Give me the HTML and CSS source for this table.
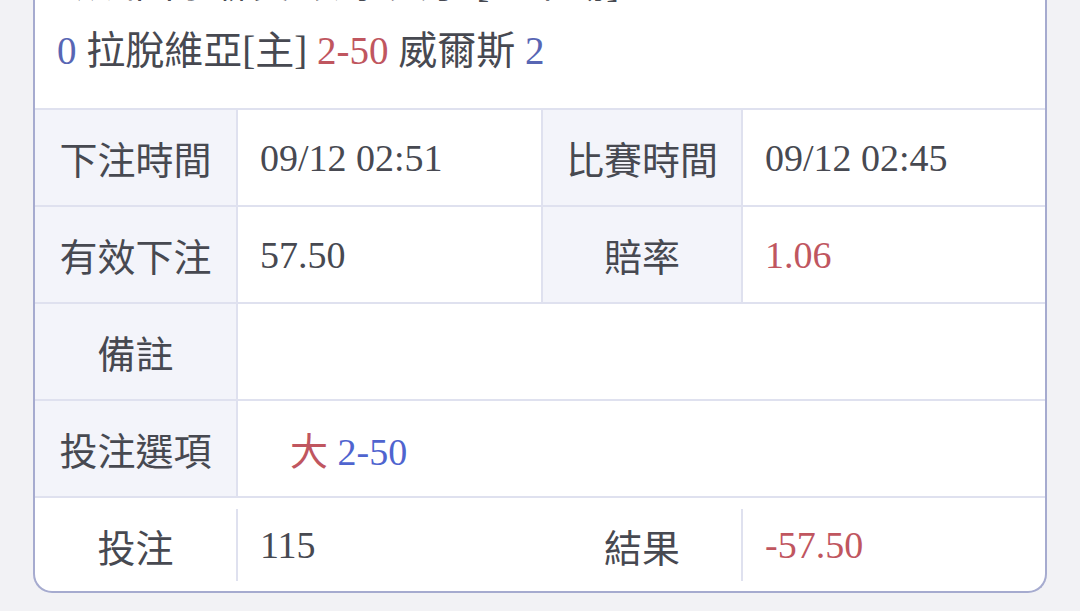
FILE: index.html
```html
<!DOCTYPE html>
<html lang="zh-Hant">
<head>
<meta charset="utf-8">
<link rel="stylesheet" href="styles.css">
</head>
<body>
<div class="page">
  <div class="card">
    <div class="head">
      <div class="line cut">歐洲國家聯賽 滾球 大小 [上半場] 09/12</div>
      <div class="line"><span class="blue">0</span> 拉脫維亞[主] <span class="red">2-50</span> 威爾斯 <span class="blue">2</span></div>
    </div>
    <div class="grid">
      <div class="cell label">下注時間</div>
      <div class="cell val">09/12 02:51</div>
      <div class="cell label">比賽時間</div>
      <div class="cell val last">09/12 02:45</div>

      <div class="cell label">有效下注</div>
      <div class="cell val">57.50</div>
      <div class="cell label">賠率</div>
      <div class="cell val last red">1.06</div>

      <div class="cell label">備註</div>
      <div class="cell val span3 last"></div>

      <div class="cell label">投注選項</div>
      <div class="cell val span3 last"><span class="opt"><span class="red">大</span> <span class="bright">2-50</span></span></div>

      <div class="cell foot"><div class="inner center">投注</div></div>
      <div class="cell foot"><div class="inner val-in">115</div></div>
      <div class="cell foot"><div class="inner center">結果</div></div>
      <div class="cell foot"><div class="inner val-in red">-57.50</div></div>
    </div>
  </div>
</div>
</body>
</html>
```
FILE: styles.css
```css
html, body {
  margin: 0;
  padding: 0;
  background: #f2f2f5;
}
body {
  font-family: "Liberation Serif", "Noto Sans CJK TC", serif;
  color: #474951;
  overflow: hidden;
  height: 611px;
}
.page {
  padding: 0 33px;
}
.card {
  margin-top: -41px;
  background: #ffffff;
  border: 2px solid #a6abcf;
  border-top: none;
  border-radius: 0 0 19px 19px;
  overflow: hidden;
}
.head {
  display: flex;
  flex-direction: column;
  gap: 17px;
  padding: 0 22px 32px;
  font-size: 39px;
}
.line {
  line-height: 50px;
  height: 50px;
  white-space: nowrap;
}
.blue { color: #5866b4; }
.red { color: #c0565f; }
.bright { color: #4f64cf; }

.grid {
  display: grid;
  grid-template-columns: 203px 305px 200px 1fr;
  grid-template-rows: repeat(4, 97px) 93px;
  border-top: 2px solid #dfe1ef;
  font-size: 38px;
}
.cell {
  box-sizing: border-box;
  display: flex;
  align-items: center;
  border-right: 2px solid #dfe1ef;
  border-bottom: 2px solid #dfe1ef;
}
.cell.last { border-right: none; }
.label {
  justify-content: center;
  background: #f3f4fa;
  font-family: "Noto Sans CJK TC", sans-serif;
}
.val {
  padding-left: 22px;
}
.span3 { grid-column: span 3; }
.opt { margin-left: 30px; }

.foot {
  border: none;
  padding: 11px 0 10px;
  align-items: stretch;
}
.inner {
  flex: 1;
  display: flex;
  align-items: center;
}
.center {
  justify-content: center;
  font-family: "Noto Sans CJK TC", sans-serif;
}
.foot:nth-last-child(4) .inner { border-right: 2px solid #dfe1ef; }
.foot:nth-last-child(2) .inner { border-right: 2px solid #dfe1ef; }
.val-in { padding-left: 22px; }
```
